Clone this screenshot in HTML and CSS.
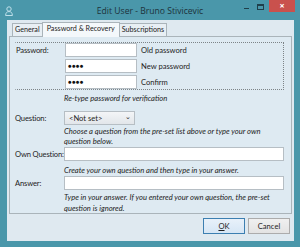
FILE: index.html
```html
<!DOCTYPE html>
<html lang="en">
<head>
    <meta charset="UTF-8">
    <title>Edit User</title>
    <link rel="stylesheet" href="styles.css">
</head>
<body>
    <div class="window">
        <div class="titlebar">
            <div class="app-icon">
                <svg width="8" height="10" viewBox="0 0 8 10">
                    <circle cx="4" cy="3" r="2.2" fill="none" stroke="#bfe0ea" stroke-width="1"/>
                    <path d="M0.6 9.5 C0.8 6.5 2 5.6 4 5.6 C6 5.6 7.2 6.5 7.4 9.5 Z" fill="none" stroke="#bfe0ea" stroke-width="1"/>
                </svg>
            </div>
            <div class="title">Edit User - Bruno Stivicevic</div>
            <div class="win-buttons">
                <span class="win-min"></span>
                <span class="win-max"></span>
                <span class="win-close">×</span>
            </div>
        </div>
        <div class="client">
            <div class="tabs">
                <div class="tab">General</div>
                <div class="tab active">Password &amp; Recovery</div>
                <div class="tab">Subscriptions</div>
            </div>
            <div class="panel">
                <div class="pw-group">
                    <div class="row">
                        <div class="label">Password:</div>
                        <div class="pw-fields">
                            <div class="pw-line"><div class="input short"></div><span>Old password</span></div>
                            <div class="pw-line"><div class="input short dots">●●●●</div><span>New password</span></div>
                            <div class="pw-line"><div class="input short dots">●●●●</div><span>Confirm</span></div>
                        </div>
                    </div>
                </div>
                <div class="hint first">Re-type password for verification</div>
                <div class="row">
                    <div class="label">Question:</div>
                    <div class="combo"><span>&lt;Not set&gt;</span><span class="arrow">⌄</span></div>
                </div>
                <div class="hint two">Choose a question from the pre-set list above or type your own question below.</div>
                <div class="row">
                    <div class="label">Own Question:</div>
                    <div class="input wide"></div>
                </div>
                <div class="hint">Create your own question and then type in your answer.</div>
                <div class="row">
                    <div class="label">Answer:</div>
                    <div class="input wide"></div>
                </div>
                <div class="hint last">Type in your answer. If you entered your own question, the pre-set question is ignored.</div>
            </div>
            <div class="buttons">
                <div class="btn default"><span class="key">O</span>K</div>
                <div class="btn">Cancel</div>
            </div>
        </div>
    </div>
</body>
</html>
```

FILE: styles.css
```css
body {
    margin: 0;
    font-family: Lato, "Open Sans", sans-serif;
    font-size: 7.6px;
    color: #1e1e1e;
}
.window {
    width: 300px;
    height: 247px;
    background: #4a97aa;
    display: flex;
    flex-direction: column;
}
.titlebar {
    height: 20px;
    flex: none;
    display: grid;
    grid-template-columns: 60px 1fr 60px;
    align-items: center;
}
.app-icon {
    padding-left: 5px;
    padding-top: 1px;
    display: flex;
}
.title {
    text-align: center;
    font-family: "Open Sans", sans-serif;
    font-size: 8.6px;
    color: #1d323a;
    padding-top: 1px;
}
.win-buttons {
    display: flex;
    align-self: start;
    justify-content: flex-end;
    align-items: flex-start;
    padding-right: 5px;
}
.win-min {
    width: 5px;
    height: 1px;
    background: #1f3f4a;
    margin-top: 8px;
    margin-right: 8px;
}
.win-max {
    width: 5px;
    height: 3px;
    border: 1px solid #1f3f4a;
    border-top-width: 2px;
    margin-top: 4px;
    margin-right: 5px;
}
.win-close {
    width: 26px;
    height: 12px;
    background: #c9514d;
    color: #fff;
    font-family: "Open Sans", sans-serif;
    font-size: 9px;
    line-height: 11px;
    text-align: center;
    font-weight: bold;
}
.client {
    flex: 1;
    margin: 0 6px 6px 7px;
    background: #dfe9f0;
    display: flex;
    flex-direction: column;
    padding: 2px 2px 0 2px;
}
.tabs {
    display: flex;
    padding-left: 3px;
    align-items: flex-end;
    height: 14px;
    flex: none;
    font-size: 7.2px;
}
.tab {
    height: 12px;
    line-height: 12px;
    padding: 0 2px;
    border: 1px solid #aab4ba;
    border-bottom: none;
    background: #e8eff4;
    margin-right: -1px;
    color: #222;
}
.tab.active {
    height: 14px;
    background: #f4f8fb;
    padding: 0 4px;
    position: relative;
    z-index: 1;
    margin-bottom: -1px;
}
.panel {
    border: 1px solid #aab4ba;
    background: #deeaf2;
    height: 178px;
    padding: 5px 7px 0 5px;
    box-sizing: border-box;
    flex: none;
}
.pw-group {
    border: 1px dotted #7d8488;
    border-left-color: transparent;
}
.row {
    display: flex;
    align-items: flex-start;
}
.label {
    width: 49px;
    flex: none;
    line-height: 14px;
    white-space: nowrap;
    letter-spacing: -0.15px;
}
.pw-fields {
    display: flex;
    flex-direction: column;
    gap: 2px;
}
.pw-line {
    display: flex;
    align-items: center;
    gap: 4px;
}
.input {
    height: 14px;
    background: #fff;
    border: 1px solid #b6bec4;
    box-sizing: border-box;
}
.input.short {
    width: 72px;
}
.input.wide {
    flex: 1;
}
.dots {
    font-size: 6px;
    line-height: 12px;
    padding-left: 2px;
    letter-spacing: 0.3px;
    color: #111;
}
.hint {
    font-style: italic;
    line-height: 10.5px;
    padding: 4px 0 1px 49px;
    color: #222;
}
.hint.first {
    padding-top: 3px;
    padding-bottom: 7px;
}
.hint.two {
    padding-top: 1px;
    padding-bottom: 0;
}
.hint.last {
    padding-top: 2px;
}
.combo {
    width: 71px;
    height: 14px;
    box-sizing: border-box;
    border: 1px solid #b6bec4;
    background: linear-gradient(#f3f5f7, #e2e6ea);
    display: flex;
    justify-content: space-between;
    align-items: center;
    padding: 0 3px 0 4px;
}
.arrow {
    font-size: 7px;
    line-height: 6px;
    margin-top: -3px;
}
.buttons {
    display: flex;
    justify-content: flex-end;
    gap: 3px;
    padding: 4px 2px 0 0;
}
.btn {
    width: 42px;
    height: 16px;
    box-sizing: border-box;
    border: 1px solid #acacac;
    background: linear-gradient(#f0f0f0, #e3e3e3);
    text-align: center;
    line-height: 14px;
}
.btn.default {
    border-color: #3c7fb1;
    background: linear-gradient(#e8f1fa, #d6e6f5);
}
.key {
    text-decoration: underline;
}
```
